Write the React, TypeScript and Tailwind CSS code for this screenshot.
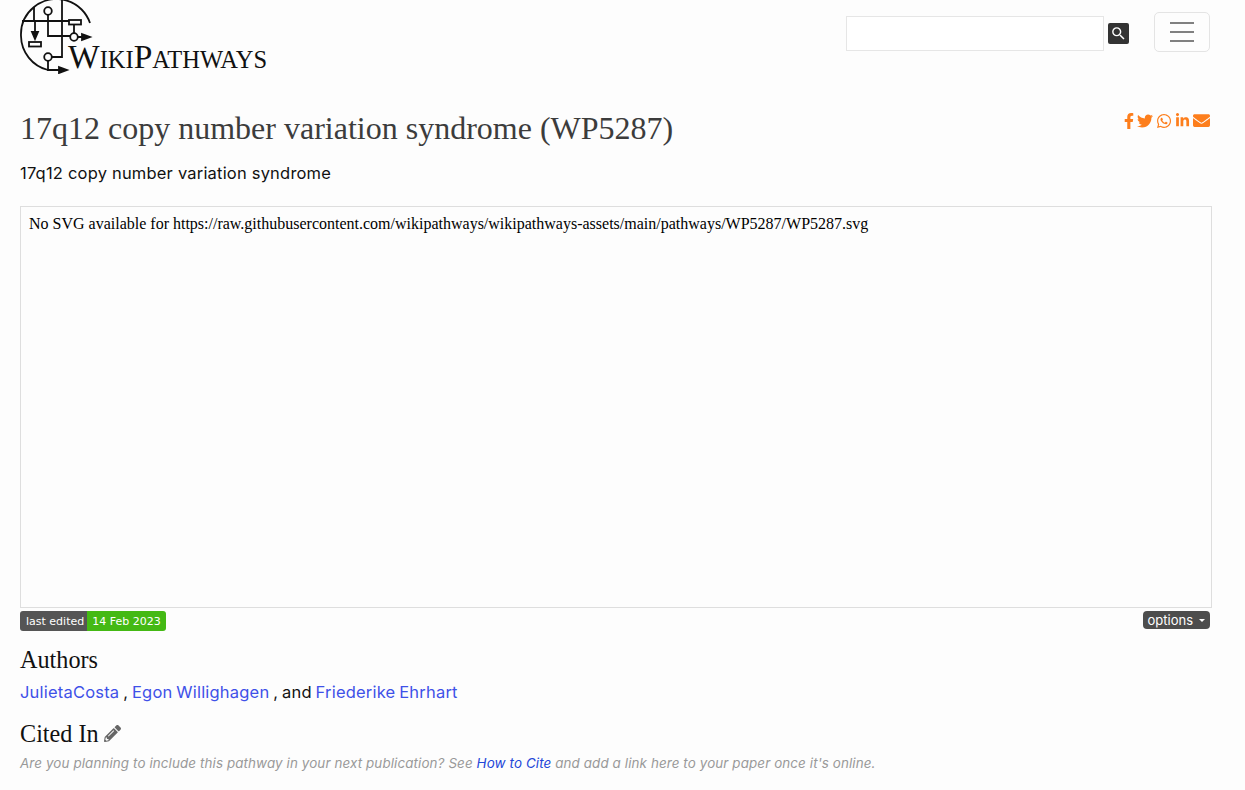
import { FaEnvelope, FaFacebookF, FaLinkedinIn, FaPencilAlt, FaTwitter, FaWhatsapp } from "react-icons/fa";
import { MdSearch } from "react-icons/md";

const body = "font-['Inter','Noto_Sans',sans-serif]";
const serif = "font-['Liberation_Serif',serif]";

function Logo() {
  return (
    <div className="relative h-[74px] w-[250px] shrink-0">
      <svg width="250" height="74" viewBox="20 0 250 74" fill="none" stroke="#111" strokeWidth="1.8" className="absolute left-0 top-0">
        <path d="M90 23A35.500 35.500 0 0 0 34 7 35.500 35.500 0 0 0 21 36 35.500 35.500 0 0 0 48 70" />
        <path d="M22 21H69M34 7V21M62 0V57H52M48 15V36H70M48 61V70H60" />
        <path d="M35 21V34" />
        <path d="M32 32l3 7 3-7z" fill="#111" />
        <circle cx="48" cy="11" r="3.800" fill="#fff" />
        <circle cx="74" cy="37" r="3.800" fill="#fff" />
        <circle cx="48" cy="57" r="3.800" fill="#fff" />
        <rect x="69" y="20" width="12" height="4.500" fill="#fff" />
        <rect x="29" y="42" width="12" height="4.500" fill="#fff" />
        <path d="M74 24V33M78 37H84" />
        <path d="M82 34l8 3-8 3z" fill="#111" />
        <path d="M59 67l8 3-8 3z" fill="#111" />
      </svg>
      <div className={`${serif} absolute left-[48px] top-[39px] whitespace-nowrap text-[33.5px] leading-[36px] text-[#111]`}>
        W<span className="text-[24.500px]">IKI</span>P<span className="text-[24.500px]">ATHWAYS</span>
      </div>
    </div>
  );
}

export default function App() {
  return (
    <div className={`${body} h-[790px] w-[1245px] overflow-hidden bg-[#fdfdfd] text-[#111]`}>
      <header className="flex h-[74px] items-start justify-between pl-5 pr-[35px]">
        <Logo />
        <div className="flex items-start">
          <input className="mt-4 h-[35px] w-[258px] border border-[#e6e6e6] bg-white" aria-label="search" />
          <span className="ml-1 mt-[23px] flex h-[21px] w-[21px] items-center justify-center rounded-[2px] bg-[#333] text-white">
            <MdSearch className="size-[17px]" />
          </span>
          <button className="ml-[25px] mt-3 flex h-10 w-14 flex-col items-center justify-center gap-[7px] rounded-[5px] border border-[#e4e4e4]">
            <span className="h-[2px] w-6 bg-[#808080]" />
            <span className="h-[2px] w-6 bg-[#808080]" />
            <span className="h-[2px] w-6 bg-[#808080]" />
          </button>
        </div>
      </header>

      <main className="pl-5 pr-[33px]">
        <div className="mt-[34px] flex items-start justify-between">
          <h1 className={`${serif} text-[32px] leading-[40px] text-[#3c3c3c]`}>17q12 copy number variation syndrome (WP5287)</h1>
          <div className="mr-[2px] mt-[4px] flex items-center text-[#fd7e1c]">
            <FaFacebookF className="h-[16px] w-[10px]" />
            <FaTwitter className="ml-[3px] size-[16px]" />
            <FaWhatsapp className="ml-[3px] size-[16px]" />
            <FaLinkedinIn className="ml-[3px] size-[15px]" />
            <FaEnvelope className="ml-[3px] size-[17px]" />
          </div>
        </div>

        <p className="mt-[13px] text-[16.500px] leading-[24px] tracking-[0.2px]">17q12 copy number variation syndrome</p>

        <div className={`${serif} mt-[21px] h-[402px] border border-[#dedede] px-2 pt-[6px] text-[16px] leading-[21px] text-black`}>
          No SVG available for https://raw.githubusercontent.com/wikipathways/wikipathways-assets/main/pathways/WP5287/WP5287.svg
        </div>

        <div className="mt-[3px] flex items-start justify-between pr-[2px] font-['DejaVu_Sans',sans-serif]">
          <div className="flex h-5 overflow-hidden rounded-[3px] text-[11px] leading-[21px] text-white">
            <span className="bg-[#555] pl-[6px] pr-[3px]">last edited</span>
            <span className="bg-[#44b914] px-[5px]">14 Feb 2023</span>
          </div>
          <button className={`${body} flex h-[18px] items-center gap-[6px] rounded-[4px] bg-[#4d4d4d] px-[5px] text-[13px] leading-[18px] text-white`}>
            options
            <span className="border-x-[3px] border-t-[3px] border-x-transparent border-t-white" />
          </button>
        </div>

        <h2 className={`${serif} mt-[14px] text-[24.200px] leading-[29px]`}>Authors</h2>
        <p className="mt-[6px] text-[16.500px] leading-[24px] tracking-[0.2px] [word-spacing:-1px]">
          <a className="text-[#3f51e8]">JulietaCosta</a> , <a className="text-[#3f51e8]">Egon Willighagen</a> , and{" "}
          <a className="text-[#3f51e8]">Friederike Ehrhart</a>
        </p>

        <h2 className={`${serif} mt-[15px] flex items-center gap-[5px] text-[24.200px] leading-[29px]`}>
          Cited In <FaPencilAlt className="size-[17px] text-[#666]" />
        </h2>
        <p className="mt-[5px] text-[13.400px] italic leading-[20px] tracking-[0.11px] text-[#999]">
          Are you planning to include this pathway in your next publication? See <a className="text-[#2346d8]">How to Cite</a> and add a link here to your paper once it's online.
        </p>
      </main>
    </div>
  );
}
